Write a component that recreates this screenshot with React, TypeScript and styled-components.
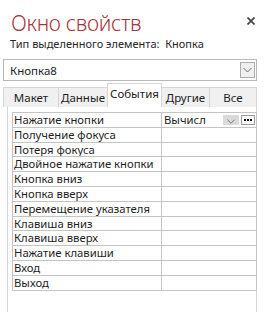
import React from "react";
import styled, { createGlobalStyle } from "styled-components";

const Global = createGlobalStyle`
  html, body { margin: 0; padding: 0; background: #ffffff; }
  body { font-family: "Noto Sans", "Open Sans", sans-serif; color: #1e1e1e; }
`;

const Sheet = styled.div`
  width: 267px;
  height: 312px;
  overflow: hidden;
  background: #ffffff;
  display: flex;
  flex-direction: column;
`;

const Header = styled.div`
  display: flex;
  justify-content: space-between;
  align-items: flex-start;
  padding: 10px 12px 0 11px;
  height: 27px;
`;

const Title = styled.h1`
  margin: 0;
  font-family: "Noto Sans", sans-serif;
  font-weight: 300;
  font-size: 21px;
  letter-spacing: -0.3px;
  line-height: 27px;
  color: #a4373a;
`;

const Close = styled.button`
  border: none;
  background: none;
  padding: 0;
  margin-top: 7px;
  width: 8px;
  height: 8px;
  display: flex;
  cursor: pointer;
`;

const Subtitle = styled.div`
  padding: 0 0 0 10px;
  font-size: 11px;
  line-height: 14px;
  white-space: pre;
  color: #262626;
`;

const Combo = styled.div`
  margin: 8px 10px 0 3px;
  height: 22px;
  box-sizing: border-box;
  border: 1px solid #b8b8b8;
  display: flex;
  align-items: center;
  justify-content: space-between;
  padding: 0 1px 0 6px;
  font-size: 11.5px;
`;

const ComboButton = styled.div`
  width: 15px;
  height: 16px;
  box-sizing: border-box;
  border: 1px solid #adadad;
  background: #f0f0f0;
  display: flex;
  align-items: center;
  justify-content: center;
`;

const Tabs = styled.div`
  display: flex;
  align-items: flex-end;
  margin: 2px 10px 0 3px;
  height: 24px;
`;

const Tab = styled.div<{ $active?: boolean; $w?: number }>`
  box-sizing: border-box;
  ${(p) => (p.$w ? `width: ${p.$w}px;` : "flex: 1;")}
  height: ${(p) => (p.$active ? 24 : 20)}px;
  background: ${(p) => (p.$active ? "#ffffff" : "#f0f0f0")};
  border: 1px solid #d6d6d6;
  border-bottom: none;
  margin-left: -1px;
  display: flex;
  align-items: center;
  justify-content: center;
  font-size: 11.5px;
  padding-bottom: ${(p) => (p.$active ? 4 : 0)}px;
  position: relative;
  z-index: ${(p) => (p.$active ? 1 : 0)};
  &:first-child { margin-left: 0; }
`;

const Panel = styled.div`
  flex: 1;
  margin: -1px 10px 0 7px;
  border: 1px solid #d6d6d6;
  border-bottom: none;
  padding: 5px 0 0 4px;
  background: #ffffff;
`;

const Grid = styled.div`
  border-top: 1px solid #c4c4c4;
  border-left: 1px solid #c4c4c4;
  width: 245px;
  box-sizing: border-box;
`;

const Row = styled.div`
  display: grid;
  grid-template-columns: 149px 1fr;
  height: 14.8px;
  box-sizing: border-box;
`;

const Cell = styled.div<{ $value?: boolean }>`
  border-right: 1px solid #c4c4c4;
  border-bottom: 1px solid #c4c4c4;
  font-size: 11.3px;
  line-height: 13.8px;
  padding-left: ${(p) => (p.$value ? 2 : 1)}px;
  white-space: nowrap;
  overflow: hidden;
  display: flex;
  align-items: center;
`;

const ValueText = styled.span`
  flex: 1;
`;

const DropButton = styled.div`
  width: 16px;
  height: 10px;
  background: #dadada;
  display: flex;
  align-items: flex-end;
  justify-content: center;
  padding-bottom: 1px;
  box-sizing: border-box;
  margin-right: 2px;
`;

const Ellipsis = styled.div`
  width: 14px;
  height: 10px;
  box-sizing: border-box;
  border: 1px solid #a0a0a0;
  background: #ffffff;
  display: flex;
  align-items: center;
  justify-content: center;
  margin-right: 1px;
  gap: 1px;
`;

const Dot = styled.span`
  width: 2px;
  height: 2px;
  background: #111;
`;

const Chevron = ({ size = 9 }: { size?: number }) => (
  <svg width={size} height={Math.ceil(size / 2) + 1} viewBox="0 0 9 5" fill="none">
    <path d="M0.5 0.5 L4.5 4.5 L8.5 0.5" stroke="#6a6a6a" strokeWidth="1" />
  </svg>
);

const rows = [
  "Нажатие кнопки",
  "Получение фокуса",
  "Потеря фокуса",
  "Двойное нажатие кнопки",
  "Кнопка вниз",
  "Кнопка вверх",
  "Перемещение указателя",
  "Клавиша вниз",
  "Клавиша вверх",
  "Нажатие клавиши",
  "Вход",
  "Выход",
];

const tabs: { label: string; w?: number; active?: boolean }[] = [
  { label: "Макет", w: 56 },
  { label: "Данные", w: 50 },
  { label: "События", w: 55, active: true },
  { label: "Другие", w: 49 },
  { label: "Все" },
];

export default function App() {
  return (
    <Sheet>
      <Global />
      <Header>
        <Title>Окно свойств</Title>
        <Close aria-label="Закрыть">
          <svg width="8" height="8" viewBox="0 0 8 8">
            <path d="M0.5 0.5 L7.5 7.5 M7.5 0.5 L0.5 7.5" stroke="#444" strokeWidth="1.7" />
          </svg>
        </Close>
      </Header>
      <Subtitle>Тип выделенного элемента:  Кнопка</Subtitle>
      <Combo>
        <span>Кнопка8</span>
        <ComboButton>
          <Chevron />
        </ComboButton>
      </Combo>
      <Tabs>
        {tabs.map((t) => (
          <Tab key={t.label} $active={t.active} $w={t.w}>
            {t.label}
          </Tab>
        ))}
      </Tabs>
      <Panel>
        <Grid>
          {rows.map((r, i) => (
            <Row key={r}>
              <Cell>{r}</Cell>
              <Cell $value>
                {i === 0 && (
                  <>
                    <ValueText>Вычисл</ValueText>
                    <DropButton>
                      <Chevron size={8} />
                    </DropButton>
                    <Ellipsis>
                      <Dot />
                      <Dot />
                      <Dot />
                    </Ellipsis>
                  </>
                )}
              </Cell>
            </Row>
          ))}
        </Grid>
      </Panel>
    </Sheet>
  );
}
